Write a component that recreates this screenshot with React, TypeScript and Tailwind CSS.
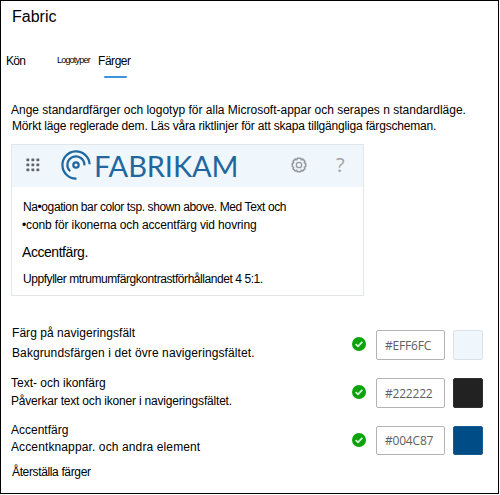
import type { ReactNode } from "react";

function Line({ className, children }: { className: string; children: ReactNode }) {
  return <div className={"h-4 whitespace-nowrap leading-4 " + className}>{children}</div>;
}

function Waffle() {
  return (
    <svg width="14" height="14" viewBox="0 0 14 14" fill="#62636b">
      {[0, 5, 10].map((y) => [0, 5, 10].map((x) => <rect key={x + "-" + y} x={x + 0.4} y={y + 0.4} width="2.9" height="2.9" rx="0.7" />))}
    </svg>
  );
}

function Logo() {
  return (
    <svg width="30" height="30" viewBox="0 0 30 30" fill="none" stroke="#1f679e" strokeWidth="2.2">
      <circle cx="15" cy="15" r="2.7" />
      <path d="M9.2 21.2A8.5 8.5 0 1 1 23.4 15.4M15.5 28.6A13.6 13.6 0 1 1 28.6 14.2" />
    </svg>
  );
}

function Gear() {
  return (
    <svg width="16" height="16" viewBox="0 0 16 16" fill="none" stroke="#96999d" strokeWidth="1.6">
      <path d="M6.4 1.3h3.2l.6 1.4 1.6-.6 2.1 2.1-.6 1.6 1.4.6v3.2l-1.4.6.6 1.6-2.1 2.1-1.6-.6-.6 1.4H6.4l-.6-1.4-1.6.6-2.1-2.1.6-1.6-1.4-.6V6.4l1.4-.6-.6-1.6 2.1-2.1 1.6.6z" strokeLinejoin="round" />
      <circle cx="8" cy="8" r="2.7" strokeWidth="1.3" />
    </svg>
  );
}

function Check() {
  return (
    <svg width="14" height="14" viewBox="0 0 14 14">
      <circle cx="7" cy="7" r="7" fill="#0aa40a" />
      <path d="M3.7 7.1 6 9.3l4.3-4.4" fill="none" stroke="#e4f8e4" strokeWidth="1.6" />
    </svg>
  );
}

function ColorRow({ value, swatch, height }: { value: string; swatch: string; height: string }) {
  return (
    <div className={"flex items-start " + height}>
      <div className="mt-[7px] w-[24px]">
        <Check />
      </div>
      <div className="flex h-full w-[69px] items-center rounded-[2px] border border-[#b3b3b3] pl-[8px] pt-px font-['Open_Sans','Noto_Sans',sans-serif] text-[12px] tracking-[-0.2px] text-[#606060]">
        {value}
      </div>
      <div className={"ml-2 h-full w-[30px] rounded-[2px] border " + swatch} />
    </div>
  );
}

export default function App() {
  return (
    <div className="h-[495px] w-[500px] bg-white">
      <div className="h-[494px] w-[499px] overflow-hidden border border-black bg-white font-['Liberation_Sans',Arial,sans-serif] text-[12px] text-black">
        <h1 className="pl-[11px] pt-[6px] text-[16px] leading-5">Fabric</h1>
        <nav className="mt-[26px] flex h-[26px] pl-[5px] leading-4">
          <span className="w-[51px] tracking-[-0.7px]">Kön</span>
          <span className="w-[41px] text-[9px] leading-[14px] tracking-[-0.8px]">Logotyper</span>
          <span className="flex flex-col tracking-[-0.45px]">
            Färger
            <span className="ml-[6px] mt-[7px] h-[2px] w-[23px] rounded-full bg-[#3b94dc]" />
          </span>
        </nav>
        <section className="mt-[23px] pl-[10px]">
          <Line className="">Ange standardfärger och logotyp för alla Microsoft-appar och serapes n standardläge.</Line>
          <Line className="pl-px tracking-[-0.18px]">Mörkt läge reglerade dem. Läs våra riktlinjer för att skapa tillgängliga färgscheman.</Line>
        </section>
        <section className="ml-[10px] mt-[10px] h-[152px] w-[353px] border border-[#e3e6e8]">
          <header className="flex h-[42px] items-center bg-[#eff6fc] pb-[2px] pl-[14px] text-[#1f679e]">
            <Waffle />
            <span className="ml-[21px] flex"><Logo /></span>
            <span className="ml-[3px] w-[156px] pt-px font-['Lato',sans-serif] text-[29px] leading-[39px] tracking-[-0.1px]">FABRIKAM</span>
            <span className="ml-[41px]"><Gear /></span>
            <span className="ml-[29px] font-['Open_Sans',sans-serif] text-[20px] text-[#a0a3a6]">?</span>
          </header>
          <div className="pl-[11px] pt-[12px]">
            <Line className="tracking-[-0.4px]">Na•ogation bar color tsp. shown above. Med Text och</Line>
            <Line className="-ml-px mt-[2px] tracking-[-0.13px]">•conb för ikonerna och accentfärg vid hovring</Line>
            <Line className="-ml-px mt-[11px] text-[14px] tracking-[-0.45px]">Accentfärg.</Line>
            <Line className="mt-[11px] tracking-[-0.44px]">Uppfyller mtrumumfärgkontrastförhållandet 4 5:1.</Line>
          </div>
        </section>
        <section className="mt-[29px] flex justify-between pl-[10px] pr-[15px]">
          <div>
            <Line className="pl-px tracking-[0.05px]">Färg på navigeringsfält</Line>
            <Line className="mt-[4px] pl-px tracking-[0.1px]">Bakgrundsfärgen i det övre navigeringsfältet.</Line>
            <Line className="mt-[14px]">Text- och ikonfärg</Line>
            <Line className="mt-[2px] tracking-[-0.19px]">Påverkar text och ikoner i navigeringsfältet.</Line>
            <Line className="mt-[13px]">Accentfärg</Line>
            <Line className="mt-px tracking-[0.12px]">Accentknappar. och andra element</Line>
            <Line className="mt-[9px] pl-px tracking-[-0.36px]">Återställa färger</Line>
          </div>
          <div className="mt-[5px] flex flex-col gap-[18px]">
            <ColorRow value="#EFF6FC" swatch="border-[#dce1e5] bg-[#eff6fc]" height="h-[30px]" />
            <ColorRow value="#222222" swatch="border-[#303030] bg-[#222222]" height="h-[30px]" />
            <ColorRow value="#004C87" swatch="border-[#185b90] bg-[#004c87]" height="h-[29px]" />
          </div>
        </section>
      </div>
    </div>
  );
}
